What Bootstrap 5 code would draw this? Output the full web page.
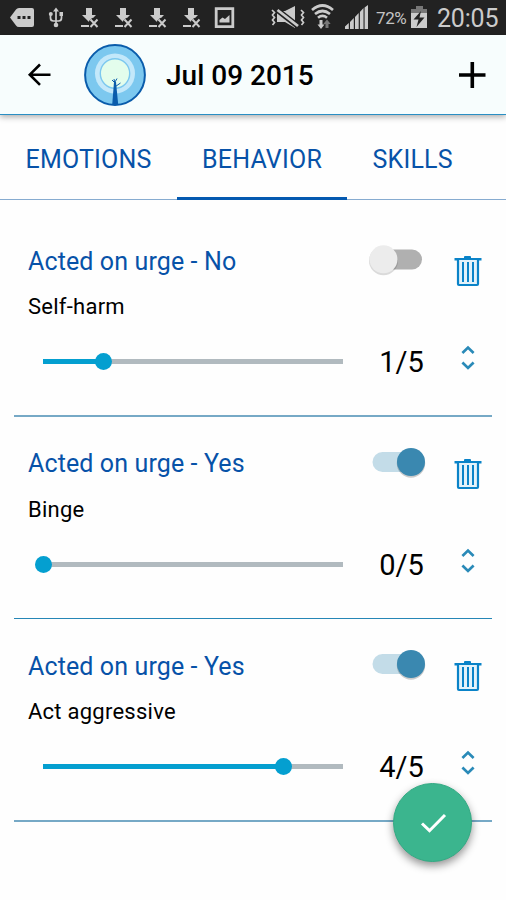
<!DOCTYPE html>
<html lang="en">
<head>
<meta charset="utf-8">
<meta name="viewport" content="width=device-width, initial-scale=1">
<title>Diary – Behavior</title>
<link href="https://cdn.jsdelivr.net/npm/bootstrap@5.3.0/dist/css/bootstrap.min.css" rel="stylesheet">
<script src="https://cdn.jsdelivr.net/npm/bootstrap@5.3.0/dist/js/bootstrap.bundle.min.js" defer></script>
<style>
  body { font-family: Roboto, "Liberation Sans", sans-serif; background: #fefefe; color: #000; width: 506px; height: 900px; overflow: hidden; }
  svg { display: block; flex: none; }
  .status-bar { height: 35px; background: #222; color: #cbcbcb; }
  .battery-text { font-size: 17px; width: 35px; line-height: 37px; letter-spacing: -.4px; color: #c4c4c4; }
  .clock-text { font-size: 25px; line-height: 38px; padding-left: 6px; letter-spacing: -.2px; }
  .app-bar { height: 80px; background: #f7fdfd; border-bottom: 1px solid #2a8fc4; box-shadow: 0 2px 6px rgba(0,0,0,.32); padding: 0 20px 0 26px; position: relative; }
  .tree-logo { margin-left: 32px; }
  .page-date { font-size: 28px; font-weight: 500; line-height: 80px; margin-left: 20px; padding-top: 2px; letter-spacing: 0; }
  .tab-strip { height: 85px; border-bottom: 1px solid #86abd0; }
  .tab-strip .nav-link { font-size: 25px; line-height: 90px; height: 85px; padding: 0; color: #0752a8; border-radius: 0; letter-spacing: .2px; }
  .tab-strip .nav-link.active { border-bottom: 3px solid #0459b0; }
  .tab-a { width: 177px; padding-left: 25.5px !important; }
  .tab-b { width: 170px; text-align: center; }
  .tab-c { padding-left: 25.5px !important; }
  .entries { padding: 14px 14px 0; }
  .entry { height: 203px; border-bottom: 2px solid #76a9c6; padding: 0 10px 0 14px; }
  .entry-mid { height: 202px; border-bottom: 1px solid #2686b6; }
  .entry-top { height: 118px; padding-top: 28px; }
  .entry-title { font-size: 25px; line-height: 40px; color: #0752a8; letter-spacing: .12px; }
  .entry-mid .entry-title { line-height: 38px; padding-bottom: 1px; }
  .entry-name { font-size: 22px; line-height: 50px; letter-spacing: .25px; }
  .entry-mid .entry-name { line-height: 52px; }
  .switch-icon { margin: 0 28px 0 0; }
  .bin-icon { margin-top: 14px; }
  .meter { position: relative; width: 300px; margin-left: 15px; }
  .meter .progress { height: 5px; border-radius: 0; background: #b1babf; }
  .meter .progress-bar { background: #049fd0; }
  .knob { position: absolute; width: 17px; height: 17px; border-radius: 50%; background: #049fd0; top: -6px; margin-left: -8.5px; }
  .score { font-size: 29px; line-height: 61px; width: 117px; text-align: center; height: 58px; }
  .entry-mid .score { line-height: 60px; }
  .stepper { margin-bottom: 6px; }
  .save-btn { position: absolute; left: 393px; top: 783px; width: 79px; height: 79px; background: #3bb58e; border: 1px solid #31aa83; box-shadow: 0 4px 8px rgba(0,0,0,.42); }
</style>
</head>
<body class="position-relative">

<svg width="0" height="0" class="position-absolute" aria-hidden="true">
  <symbol id="dl" viewBox="0 0 18 35">
    <path fill="#cbcbcb" d="M5 8h6v7h4l-7 7-7-7h4z"/>
    <path fill="#cbcbcb" d="M0 25h8v2H0z"/>
    <path stroke="#222" stroke-width="5" d="M9.500 19.500l7 7M16.500 19.500l-7 7"/>
    <path stroke="#cbcbcb" stroke-width="2" d="M9.500 19.500l7 7.500M16.500 19.500l-7 7.500"/>
  </symbol>
  <symbol id="bin" viewBox="0 0 28 31">
    <path fill="#0a83c8" d="M.5 2h9.500V1Q10 0 11 0h5q1 0 1 1v1h10.500v2.500H.5z"/>
    <path fill="#e3f2fa" stroke="#0a83c8" stroke-width="2.200" d="M4 4v24q0 1 1 1h18q1 0 1-1V4"/>
    <path fill="none" stroke="#0a83c8" stroke-width="2" d="M9 6v20M14 6v20M19 6v20"/>
  </symbol>
  <symbol id="step" viewBox="0 0 16 26">
    <path fill="none" stroke="#2a8ab8" stroke-width="2.700" d="M2.400 8L8 2.600 13.600 8M2.400 17.500L8 22.900l5.600-5.400"/>
  </symbol>
  <symbol id="sw-off" viewBox="0 0 60 34">
    <rect x="10" y="7.500" width="46" height="20" rx="10" fill="#b0b0b0"/>
    <circle cx="17.500" cy="18.800" r="14.500" fill="#000" opacity=".14"/>
    <circle cx="17.500" cy="17.300" r="14" fill="#ececec"/>
  </symbol>
  <symbol id="sw-on" viewBox="0 0 60 34">
    <rect x="6.500" y="7" width="46" height="20" rx="10" fill="#c3dce8"/>
    <circle cx="45" cy="18.500" r="14.200" fill="#000" opacity=".2"/>
    <circle cx="45" cy="17" r="14" fill="#3a88b0"/>
  </symbol>
</svg>

<div class="status-bar d-flex">
  <svg width="81" height="35" viewBox="0 0 81 35">
    <path fill="#cbcbcb" d="M10 17.500l6-8Q17 8 19 8h13q2 0 2 2v15q0 2-2 2H19q-2 0-3-1.500z"/>
    <path fill="#222" d="M17.500 16h3v3h-3zM22.500 16h3v3h-3zM27.500 16h3v3h-3z"/>
    <g fill="none" stroke="#cbcbcb" stroke-width="1.700"><path d="M56 10v15M50.500 14v4q0 3 3 3h5q3 0 3-3v-4"/></g>
    <path fill="#cbcbcb" d="M56 7.500l3 4h-6zM59.500 12h3.500v4h-3.500z"/>
    <circle cx="50.800" cy="14" r="2" fill="#cbcbcb"/><circle cx="56" cy="25" r="2.300" fill="#cbcbcb"/>
  </svg>
  <svg width="18" height="35"><use href="#dl"/></svg>
  <svg class="ms-3" width="18" height="35"><use href="#dl"/></svg>
  <svg class="ms-3" width="18" height="35"><use href="#dl"/></svg>
  <svg class="ms-3" width="18" height="35"><use href="#dl"/></svg>
  <svg width="175" height="35" viewBox="201 0 175 35">
    <path fill="none" stroke="#cbcbcb" stroke-width="2.800" d="M216.200 8.700h16.600v18h-16.600z"/>
    <path fill="#cbcbcb" d="M219.500 22.500v-2.500l3-2.500 2.500 1.500 4.500-4v7.500z"/>
    <path fill="#cbcbcb" d="M277 11h8l10-5v22l-10-6h-8z"/>
    <path stroke="#222" stroke-width="5.500" d="M276 9l23 18"/>
    <path stroke="#cbcbcb" stroke-width="2.800" d="M277.500 10l20.500 16"/>
    <path fill="none" stroke="#cbcbcb" stroke-width="1.700" d="M272 10l2.500 2.500-2 2.500 2 2.500-2 2.500 2 2.500-2 2.500M301 10l2.500 2.500-2 2.500 2 2.500-2 2.500 2 2.500-2 2.500"/>
    <g fill="none" stroke="#cbcbcb" stroke-width="2.700"><path d="M312 10q10.500-9 21 0M315 14q7.500-6 15 0M318 17.700q4.500-3.500 9 0"/></g>
    <path fill="#cbcbcb" d="M319.500 20h3v4.500h2l-3.500 4.500-3.500-4.500h2z"/>
    <path fill="#777" d="M325.500 28v-4h-2.200l3.700-4.500 3.700 4.500h-2.200v4z"/>
    <path fill="#cbcbcb" d="M345 29v-2.500l3.800-3.500v6zM350 29v-7l3.800-4v11zM355 29V17l3.700-4v16zM359.900 29V12l3.600-4v21zM364.600 29V7.500L368 5v24z"/>
  </svg>
  <span class="battery-text">72%</span>
  <svg width="20" height="35" viewBox="411 0 20 35">
    <path fill="#777" d="M416 6h7v3h4v4h-16V9h5z"/>
    <path fill="#cbcbcb" d="M411 13h16v15h-16z"/>
    <path fill="#222" d="M421 11l-7.500 8.500h5l-2 7.500 8-9.500h-5z"/>
  </svg>
  <span class="clock-text">20:05</span>
</div>

<header class="app-bar d-flex align-items-center">
  <svg width="26" height="26" viewBox="0 0 26 26"><path fill="none" stroke="#000" stroke-width="2.600" d="M24.500 12.700H4M14 2.500L3.800 12.700 14 22.900"/></svg>
  <svg class="tree-logo" width="62" height="62" viewBox="0 0 62 62">
    <circle cx="31" cy="31" r="29.900" fill="#7cc8ef" stroke="#0a5cab" stroke-width="2"/>
    <circle cx="31" cy="29.500" r="20" fill="#c3e8fa"/>
    <circle cx="31" cy="29.500" r="14.700" fill="#e3fdec" stroke="#7cc8ef" stroke-width="1.400"/>
    <path fill="#0a5cab" d="M30 38h2l2.200 22.500q-3 .8-6 .2z"/>
    <path fill="none" stroke="#0a5cab" stroke-width="1" d="M31 40l-1-5M30.500 38.500L28 36M31 38l2-3.500M31.500 42.500l5-3.500"/>
  </svg>
  <span class="page-date">Jul 09 2015</span>
  <svg class="ms-auto" width="28" height="28" viewBox="0 0 28 28"><path stroke="#000" stroke-width="3.600" d="M1 14h26.500M14.300 1v26"/></svg>
</header>

<nav class="tab-strip nav flex-nowrap">
  <a class="nav-link tab-a" href="#">EMOTIONS</a>
  <a class="nav-link tab-b active" href="#">BEHAVIOR</a>
  <a class="nav-link tab-c" href="#">SKILLS</a>
</nav>

<main class="entries">
  <section class="entry">
    <div class="entry-top d-flex align-items-start">
      <div class="flex-grow-1"><div class="entry-title">Acted on urge - No</div><div class="entry-name">Self-harm</div></div>
      <svg class="switch-icon" width="60" height="34"><use href="#sw-off"/></svg>
      <svg class="bin-icon" width="28" height="31"><use href="#bin"/></svg>
    </div>
    <div class="d-flex align-items-center">
      <div class="meter"><div class="progress"><div class="progress-bar" style="width:20%"></div></div><span class="knob" style="left:20%"></span></div>
      <div class="score">1/5</div>
      <svg class="stepper" width="16" height="26"><use href="#step"/></svg>
    </div>
  </section>
  <section class="entry entry-mid">
    <div class="entry-top d-flex align-items-start">
      <div class="flex-grow-1"><div class="entry-title">Acted on urge - Yes</div><div class="entry-name">Binge</div></div>
      <svg class="switch-icon" width="60" height="34"><use href="#sw-on"/></svg>
      <svg class="bin-icon" width="28" height="31"><use href="#bin"/></svg>
    </div>
    <div class="d-flex align-items-center">
      <div class="meter"><div class="progress"><div class="progress-bar" style="width:0%"></div></div><span class="knob" style="left:0%"></span></div>
      <div class="score">0/5</div>
      <svg class="stepper" width="16" height="26"><use href="#step"/></svg>
    </div>
  </section>
  <section class="entry">
    <div class="entry-top d-flex align-items-start">
      <div class="flex-grow-1"><div class="entry-title">Acted on urge - Yes</div><div class="entry-name">Act aggressive</div></div>
      <svg class="switch-icon" width="60" height="34"><use href="#sw-on"/></svg>
      <svg class="bin-icon" width="28" height="31"><use href="#bin"/></svg>
    </div>
    <div class="d-flex align-items-center">
      <div class="meter"><div class="progress"><div class="progress-bar" style="width:80%"></div></div><span class="knob" style="left:80%"></span></div>
      <div class="score">4/5</div>
      <svg class="stepper" width="16" height="26"><use href="#step"/></svg>
    </div>
  </section>
</main>

<button type="button" class="save-btn btn rounded-circle p-0 d-flex align-items-center justify-content-center" aria-label="Save">
  <svg width="28" height="24" viewBox="0 0 28 24"><path fill="none" stroke="#fff" stroke-width="3" d="M3 12.500l7.500 7.200L26 4"/></svg>
</button>
</body>
</html>
